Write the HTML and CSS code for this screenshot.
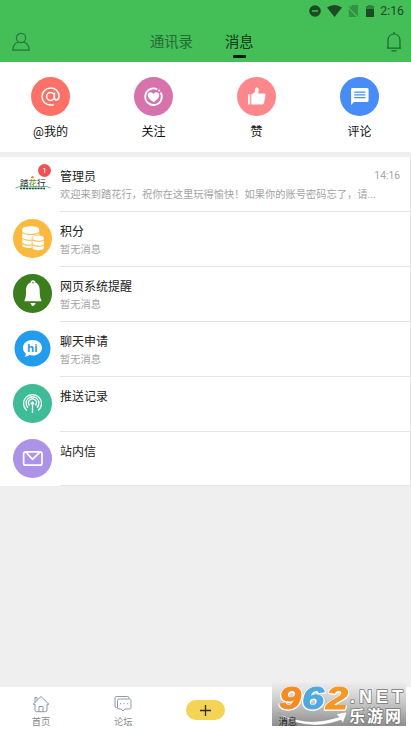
FILE: index.html
```html
<!DOCTYPE html>
<html lang="zh-CN">
<head>
<meta charset="utf-8">
<title>消息</title>
<link rel="stylesheet" href="styles.css">
</head>
<body>
<div class="app">
  <header class="header">
    <div class="status">
      <svg width="12" height="12" viewBox="0 0 12 12"><circle cx="6" cy="6" r="5.8" fill="#1b4b25"/><path d="M3 6h6" stroke="#44be57" stroke-width="1.5"/></svg>
      <svg class="wifi" width="15" height="12" viewBox="0 0 15 12"><path d="M0 2.600Q7.500-2.400 15 2.600L7.500 12Z" fill="#1b4b25"/></svg>
      <svg class="sim" width="11" height="12" viewBox="0 0 11 12"><path d="M4 0h6v11L2 3z M0.800 3.800L8.500 12H.8z" fill="#319343"/><path d="M.3.800L10.700 11.700" stroke="#319343"/></svg>
      <svg class="battery" width="8" height="12" viewBox="0 0 8 12"><path d="M2.500 0h3v1.300H8V12H0V1.300h2.500z" fill="#1b4b25"/><path d="M2.500 0h3v1.300H8V4H0V1.300h2.500z" fill="#31833e"/></svg>
      <span class="clock">2:16</span>
    </div>
    <nav class="nav">
      <svg class="user" width="20" height="20" viewBox="0 0 20 20" fill="none" stroke="#28743a" stroke-width="1.200"><circle cx="10" cy="6" r="4.600"/><path d="M7.200 10C4 11 2 14.300 1.700 18.200h16.600C18 14.300 16 11 12.800 10"/></svg>
      <div class="tabs"><span class="tab">通讯录</span><span class="tab active">消息</span></div>
      <svg class="alarm" width="16" height="20" viewBox="0 0 16 20" fill="none" stroke="#1f6331" stroke-width="1.200"><path d="M8 0v2M1 16.200h14M2 16V8.500C2 4.600 4.500 2 8 2s6 2.600 6 6.500V16M5.500 18.800h5"/></svg>
    </nav>
  </header>

  <section class="actions">
    <div class="action"><svg width="39" height="39" viewBox="0 0 39 39"><circle cx="19.500" cy="19.500" r="19.500" fill="#fd7167"/><g fill="none" stroke="#fff" stroke-width="1.500"><circle cx="19.500" cy="19.500" r="3.900"/><path d="M23.400 15.500v5.200c0 3.700 4.600 3 4.600-1.400 0-5-3.700-8.200-8.300-8.200-5 0-8.700 3.600-8.700 8.400s3.600 8.400 8.500 8.400h3.300"/></g></svg><span>@我的</span></div>
    <div class="action"><svg width="39" height="39" viewBox="0 0 39 39"><circle cx="19.500" cy="19.500" r="19.500" fill="#d673ad"/><path d="M23.300 12.300A8.300 8.300 0 1 0 26.700 15.500" fill="none" stroke="#fff" stroke-width="1.800"/><circle cx="25.200" cy="13.500" r="1" fill="#fff"/><path d="M19.500 25.200c-4-3-5.800-4.700-5.800-7 0-3.100 4-4 5.800-1.300 1.800-2.700 5.800-1.800 5.800 1.300 0 2.300-1.800 4-5.800 7z" fill="#fff"/></svg><span>关注</span></div>
    <div class="action"><svg width="39" height="39" viewBox="0 0 39 39"><circle cx="19.500" cy="19.500" r="19.500" fill="#fe878b"/><path d="M14.300 17.500l3.500-2.300.3-3.500c.2-1.700 3.400-1.700 3.600.8.100 1.500-.2 2.700-.6 4h5.700c1.300 0 1.900.8 1.700 2l-1.400 7.100c-.3 1.400-1 2-2.200 2H14.300z" fill="#fff"/><path d="M12.800 17.600h-1.300v9.500h1.300z" fill="none" stroke="#fff"/></svg><span>赞</span></div>
    <div class="action"><svg width="39" height="39" viewBox="0 0 39 39"><circle cx="19.500" cy="19.500" r="19.500" fill="#488cf8"/><path d="M12.300 11h14.900q1.400 0 1.400 1.400v11.200q0 1.400-1.400 1.400H14.100l-3 3V12.300Q11.100 11 12.300 11z" fill="#fff"/><path d="M14.200 15.100h11.200M14.200 17.900h11.200M14.200 20.700h11.200" stroke="#488cf8" stroke-width="1.200"/></svg><span>评论</span></div>
  </section>

  <main class="list">
    <article class="row">
      <div class="icon brand"><svg width="39" height="39" viewBox="0 0 39 39"><text x="7" y="22" class="brand-text">踏<tspan fill="#5b8e27">花</tspan>行</text><path d="M2.500 24q4-2 7-1.200h19q5-1.500 9 1.200" fill="none" stroke="#269367" stroke-width=".7"/><path d="M7 24.500h25" stroke="#184e39" stroke-width="1.300" stroke-dasharray="2.200 .7"/><circle cx="19.500" cy="13.200" r="1.200" fill="#ef873e"/></svg><span class="badge">1</span></div>
      <div class="body"><div class="line"><h2>管理员</h2><time>14:16</time></div><p>欢迎来到踏花行，祝你在这里玩得愉快！如果你的账号密码忘了，请...</p></div>
    </article>
    <article class="row">
      <div class="icon"><svg width="39" height="39" viewBox="0 0 39 39"><circle cx="19.500" cy="19.500" r="19.500" fill="#fcb93f"/><g fill="#fff"><path d="M9.200 10.500c0-4.400 17-4.400 17 0v5.300c-4 0-7.400 1.600-7.600 4V29c-5 .3-9.400-.6-9.400-3z"/><path d="M19.500 19c0-3.300 11.400-3.300 11.400 0v9.700c0 3.300-11.400 3.300-11.400 0z"/></g><g fill="none" stroke="#fcb93f" stroke-width="1.100"><path d="M9.200 13.300c2 2.800 14.500 3 17 0M9.200 19c1.300 1.700 5 2.500 9.400 2.200M9.200 24.200c1.300 1.500 5 2.300 9.400 2M19.500 20.700c1.500 2 10 2 11.400 0M19.500 25.700c1.500 2 10 2 11.400 0"/></g></svg></div>
      <div class="body"><h2>积分</h2><p>暂无消息</p></div>
    </article>
    <article class="row">
      <div class="icon"><svg width="39" height="39" viewBox="0 0 39 39"><circle cx="19.500" cy="19.500" r="19.500" fill="#3c7d1d"/><g fill="#fff"><path d="M11.500 26.300c1.500-2.400 1.500-5.600 1.500-9.800 0-4.600 2-7.100 4.500-7.800a2.500 2.500 0 0 1 5 0c2.500.7 4.200 3.200 4.200 7.800 0 4.200.2 7.400 1.700 9.800v1H11.500zM16.800 29h5.700a3 3 0 0 1-3.800 2.800c0-1.100-.7-2-1.900-2.800z"/></g><circle cx="20" cy="8.700" r=".8" fill="#3c7d1d"/></svg></div>
      <div class="body"><h2>网页系统提醒</h2><p>暂无消息</p></div>
    </article>
    <article class="row">
      <div class="icon"><svg width="39" height="39" viewBox="0 0 39 39"><circle cx="19.500" cy="19.500" r="18" fill="#229ced"/><path d="M19.500 11c5.400 0 9.500 3.300 9.500 7.700s-4.100 7.800-9.500 7.800c-1.200 0-2.300-.1-3.300-.4-1 1-2.600 1.700-4.500 1.700.7-1 1.100-2.100 1.200-3.200A7 7 0 0 1 10 18.700C10 14.300 14.100 11 19.500 11z" fill="#fff"/><text x="19.400" y="22.600" class="hi">hi</text></svg></div>
      <div class="body"><h2>聊天申请</h2><p>暂无消息</p></div>
    </article>
    <article class="row">
      <div class="icon"><svg width="39" height="39" viewBox="0 0 39 39"><circle cx="19.500" cy="19.500" r="19.500" fill="#40bb98"/><g fill="none" stroke="#fff" stroke-width="1.300"><path d="M13.800 26.500a9 9 0 1 1 11.400 0M15 23.700a6.400 6.400 0 1 1 9 0M16.600 21.500a3.900 3.900 0 1 1 5.800 0M19.500 19v10"/></g><circle cx="19.500" cy="19.200" r="1.700" fill="#fff"/></svg></div>
      <div class="body"><h2>推送记录</h2></div>
    </article>
    <article class="row">
      <div class="icon"><svg width="39" height="39" viewBox="0 0 39 39"><circle cx="19.500" cy="19.500" r="19.500" fill="#ac93e8"/><path d="M12 12.800h15q2 0 2 2v9.400q0 2-2 2H12.600q-2 0-2-2V14.800q0-2 2-2l6.900 7.500 7.200-7" fill="none" stroke="#fff" stroke-width="1.700"/></svg></div>
      <div class="body"><h2>站内信</h2></div>
    </article>
  </main>

  <footer class="tabbar">
    <div class="item"><svg width="18" height="18" viewBox="0 0 18 18" fill="none" stroke="#8e9aa8" stroke-width="1"><path d="M1 9.300L9 1.500l8 7.800h-2V15q0 1.700-1.700 1.700H4.700Q3 16.700 3 15V9.300H1M3 7.200V2.500h2v2.700M7 16.500v-5h4v5"/></svg><span>首页</span></div>
    <div class="item"><svg width="18" height="18" viewBox="0 0 18 18" fill="none" stroke="#8e9aa8" stroke-width="1"><path d="M3.500 12.500h-1q-1.500 0-1.500-1.500V3q0-1.500 1.500-1.500h11q1.500 0 1.500 1.500v.8M5 4h10.500Q17 4 17 5.500v7q0 1.500-1.500 1.500H11l-2 2-1.800-2H5q-1.500 0-1.500-1.500v-7Q3.500 4 5 4z"/><path d="M6 8.700h1M9.600 8.700h1M13.200 8.700h1" stroke-width="1.200"/></svg><span>论坛</span></div>
    <div class="item"><div class="add"><svg width="11" height="11" viewBox="0 0 11 11"><path d="M5.500 0v11M0 5.500h11" stroke="#302d1b" stroke-width="1.300"/></svg></div></div>
    <div class="item current"><svg width="18" height="18"></svg><span>消息</span></div>
    <div class="item"><svg width="18" height="18"></svg><span>我的</span></div>
  </footer>

  <div class="watermark">
    <svg width="134" height="44" viewBox="0 0 134 44">
      <g class="digits"><text x="7" y="27" textLength="22" lengthAdjust="spacingAndGlyphs" fill="#f68b24" stroke="#f68b24">9</text><text x="30" y="27" textLength="22" lengthAdjust="spacingAndGlyphs" fill="#4fa9df" stroke="#4fa9df">6</text><text x="54" y="27" textLength="22" lengthAdjust="spacingAndGlyphs" fill="#f89723" stroke="#f89723">2</text></g>
      <text class="net" x="78" y="21" textLength="53" lengthAdjust="spacing">.NET</text>
      <path d="M6 31Q34 46 67 35l-3-3 11-2-4 11-2-3Q34 51 6 31z" fill="#fff" stroke="#888" stroke-width=".4"/>
      <text class="site" x="77" y="40" textLength="52">乐游网</text>
    </svg>
  </div>
</div>
</body>
</html>
```
FILE: styles.css
```css
* { box-sizing: border-box; }
body { margin: 0; font-family: Roboto, "Noto Sans CJK SC", sans-serif; color: #222; background: #efefef; }
svg { display: block; flex: none; }
h2, p { margin: 0; font-weight: 400; }
.app { position: relative; width: 411px; height: 732px; display: flex; flex-direction: column; overflow: hidden; }
.header { height: 62px; background: #44be57; flex: none; }
.status { height: 22px; padding: 0 7px 0 0; display: flex; justify-content: flex-end; align-items: center; }
.wifi { margin-left: 6px; }
.sim { margin-left: 6px; }
.battery { margin-left: 7px; }
.clock { margin-left: 6px; font-size: 12.300px; line-height: 20px; color: #1b4b25; }
.nav { height: 40px; padding: 0 9px 0 11px; display: flex; align-items: center; }
.tabs { display: flex; gap: 32px; height: 40px; margin-left: 119px; }
.alarm { margin-left: auto; }
.tab { display: flex; flex-direction: column; align-items: center; padding-top: 10px; font-size: 14.300px; line-height: 20px; color: #236a34; }
.tab.active { color: #10371a; }
.tab.active::after { content: ""; width: 13px; height: 3px; margin-top: 3px; border-radius: 1px; background: #081e0d; }
.actions { height: 90px; padding-top: 15px; display: grid; grid-template-columns: repeat(4, 103px); margin-left: -1px; background: #fff; box-shadow: 1px 0 #fff; flex: none; }
.action { display: flex; flex-direction: column; align-items: center; font-size: 12px; color: #111; }
.action span { margin-top: 7px; line-height: 18px; }
.list { margin-top: 5px; height: 329px; background: #fff; border-right: 1px solid #e3e3e3; flex: none; }
.row { height: 55px; display: flex; padding-left: 13px; }
.icon { position: relative; width: 39px; height: 39px; margin-top: 7px; flex: none; }
.row:last-child .body { height: 54px; }
.body { flex: 1; margin-left: 8px; padding-top: 11px; border-bottom: 1px solid #e5e5e5; }
.line { display: flex; justify-content: space-between; }
h2 { font-size: 12px; line-height: 18px; }
time { margin-right: 10px; font-size: 10.300px; line-height: 16px; color: #a5a5a5; }
p { font-size: 10.250px; line-height: 16px; margin-top: 1px; color: #a3a3a3; white-space: nowrap; }
.badge { position: absolute; top: 0; left: 25px; width: 13px; height: 13px; border-radius: 50%; background: #ef5256; color: #fff; font-size: 8px; line-height: 13px; text-align: center; }
.brand-text { font: 400 8.500px "Noto Sans CJK SC", sans-serif; fill: #20251e; }
.hi { font: 700 11px "Open Sans", sans-serif; fill: #229ced; text-anchor: middle; }
.tabbar { margin-top: auto; height: 45px; padding-top: 8px; background: #fff; display: grid; grid-template-columns: repeat(5, 1fr); flex: none; }
.item { display: flex; flex-direction: column; align-items: center; font-size: 9.300px; line-height: 14px; color: #898989; }
.item span { margin-top: 2px; }
.current { position: relative; z-index: 2; color: #222; }
.add { width: 39px; height: 20px; margin-top: 5px; border-radius: 10px; background: #f3d454; display: flex; align-items: center; justify-content: center; }
.watermark { position: absolute; z-index: 1; left: 272px; top: 682px; width: 134px; height: 44px; overflow: hidden; background: linear-gradient(rgba(238,238,238,.9), rgba(190,190,190,.9) 50%, rgba(130,130,130,.9)); }
.digits { font: italic 700 32px "Liberation Sans", sans-serif; stroke-width: 1px; filter: drop-shadow(1px 0 #fff) drop-shadow(-1px 0 #fff) drop-shadow(0 1px #fff); }
.net { font: 700 18px "Liberation Sans", sans-serif; fill: #fff; stroke: #777; stroke-width: 1.500px; paint-order: stroke; }
.site { font: 700 16px "Noto Sans CJK SC", sans-serif; fill: #fff; stroke: #777; stroke-width: 1.500px; paint-order: stroke; }
```
